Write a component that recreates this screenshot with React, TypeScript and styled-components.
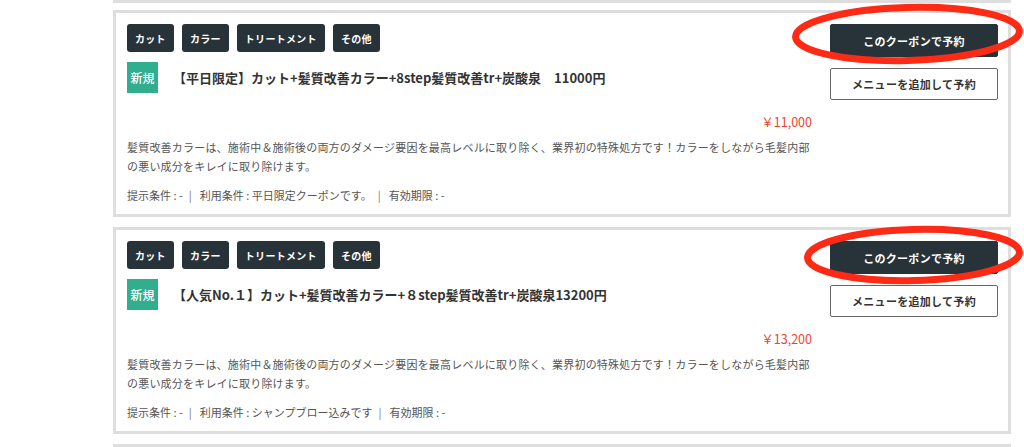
import styled, { createGlobalStyle } from "styled-components";

const GlobalStyle = createGlobalStyle`
  html, body {
    margin: 0;
    padding: 0;
    background: #fff;
    overflow: hidden;
  }
  body {
    font-family: "Noto Sans CJK JP", "Noto Sans", "Liberation Sans", sans-serif;
    color: #333;
  }
`;

interface Coupon {
  title: string;
  price: string;
  description: string;
  terms: string;
  ring: { left: number; top: number; width: number; height: number };
}

const coupons: Coupon[] = [
  {
    title: "【平日限定】カット+髪質改善カラー+8step髪質改善tr+炭酸泉　11000円",
    price: "￥11,000",
    description:
      "髪質改善カラーは、施術中＆施術後の両方のダメージ要因を最高レベルに取り除く、業界初の特殊処方です！カラーをしながら毛髪内部の悪い成分をキレイに取り除けます。",
    terms: "平日限定クーポンです。",
    ring: { left: -38, top: -20, width: 231, height: 60 },
  },
  {
    title: "【人気No.１】カット+髪質改善カラー+８step髪質改善tr+炭酸泉13200円",
    price: "￥13,200",
    description:
      "髪質改善カラーは、施術中＆施術後の両方のダメージ要因を最高レベルに取り除く、業界初の特殊処方です！カラーをしながら毛髪内部の悪い成分をキレイに取り除けます。",
    terms: "シャンプブロー込みです",
    ring: { left: -26, top: -15, width: 219, height: 58 },
  },
];

const tags = ["カット", "カラー", "トリートメント", "その他"];

const Page = styled.div`
  width: 898px;
  margin-left: 113px;
  display: flex;
  flex-direction: column;
  gap: 7px;
`;

const PrevCardTail = styled.div`
  height: 0;
  border: 3px solid #dedede;
  border-top: none;
`;

const Card = styled.div`
  border: 3px solid #dedede;
  background: #fff;
  display: flex;
  gap: 18px;
  padding: 11px 10px 9px 11px;
  margin-bottom: 3px;
`;

const NextCardHead = styled.div`
  height: 10px;
  border: 3px solid #dedede;
  border-bottom: none;
`;

const Main = styled.div`
  width: 685px;
  display: flex;
  flex-direction: column;
`;

const TagRow = styled.div`
  display: flex;
  gap: 8px;
`;

const Tag = styled.span`
  height: 28px;
  padding: 0 8px;
  display: flex;
  align-items: center;
  background: #283339;
  color: #fff;
  border-radius: 3px;
  font-size: 10px;
  font-weight: 700;
  letter-spacing: 0.3px;
`;

const TitleRow = styled.div`
  display: flex;
  align-items: center;
  gap: 15px;
  margin-top: 10px;
`;

const NewBadge = styled.span`
  width: 31px;
  height: 31px;
  display: flex;
  align-items: center;
  justify-content: center;
  background: #30ae8d;
  color: #fff;
  font-size: 12px;
  font-weight: 500;
`;

const Title = styled.h3`
  margin: 0;
  font-size: 13px;
  font-weight: 700;
  color: #333;
`;

const Price = styled.div`
  margin-top: 19px;
  text-align: right;
  line-height: 19px;
  font-size: 12.5px;
  color: #f0432c;
`;

const Description = styled.p`
  margin: 7px 0 0;
  font-size: 11px;
  letter-spacing: 0.2px;
  line-height: 19px;
  color: #555;
`;

const Terms = styled.div`
  margin-top: 10px;
  display: flex;
  align-items: center;
  font-size: 11px;
  line-height: 19px;
  color: #555;
`;

const Sep = styled.span`
  padding: 0 8px 0 6px;
  color: #777;
`;

const Side = styled.div`
  position: relative;
  width: 168px;
  display: flex;
  flex-direction: column;
  gap: 11px;
`;

const Button = styled.button<{ $primary?: boolean }>`
  height: ${(p) => (p.$primary ? "33px" : "32px")};
  width: 100%;
  border-radius: 2px;
  border: 1px solid ${(p) => (p.$primary ? "#283339" : "#666")};
  background: ${(p) => (p.$primary ? "#283339" : "#fff")};
  color: ${(p) => (p.$primary ? "#fff" : "#333")};
  font-family: inherit;
  font-size: 11px;
  font-weight: 700;
  letter-spacing: 0.3px;
  cursor: pointer;
`;

// red hand-drawn ring laid over the reserve button
const Ring = styled.svg`
  position: absolute;
  display: block;
  pointer-events: none;
  overflow: visible;
`;

const App = () => {
  return (
    <>
      <GlobalStyle />
      <Page>
        <PrevCardTail />
        {coupons.map((c, i) => (
          <Card key={i}>
            <Main>
              <TagRow>
                {tags.map((t) => (
                  <Tag key={t}>{t}</Tag>
                ))}
              </TagRow>
              <TitleRow>
                <NewBadge>新規</NewBadge>
                <Title>{c.title}</Title>
              </TitleRow>
              <Price>{c.price}</Price>
              <Description>{c.description}</Description>
              <Terms>
                <span>提示条件 : -</span>
                <Sep>|</Sep>
                <span>利用条件 : {c.terms}</span>
                <Sep>|</Sep>
                <span>有効期限 : -</span>
              </Terms>
            </Main>
            <Side>
              <Button $primary>このクーポンで予約</Button>
              <Button>メニューを追加して予約</Button>
              <Ring
                width={c.ring.width}
                height={c.ring.height}
                style={{ left: c.ring.left, top: c.ring.top }}
                viewBox={`0 0 ${c.ring.width} ${c.ring.height}`}
              >
                <ellipse
                  cx={c.ring.width / 2}
                  cy={c.ring.height / 2}
                  rx={c.ring.width / 2 - 3.5}
                  ry={c.ring.height / 2 - 3.5}
                  fill="none"
                  stroke="#fd2a16"
                  strokeWidth={7}
                  transform={`rotate(-1.5 ${c.ring.width / 2} ${c.ring.height / 2})`}
                />
              </Ring>
            </Side>
          </Card>
        ))}
        <NextCardHead />
      </Page>
    </>
  );
};

export default App;
